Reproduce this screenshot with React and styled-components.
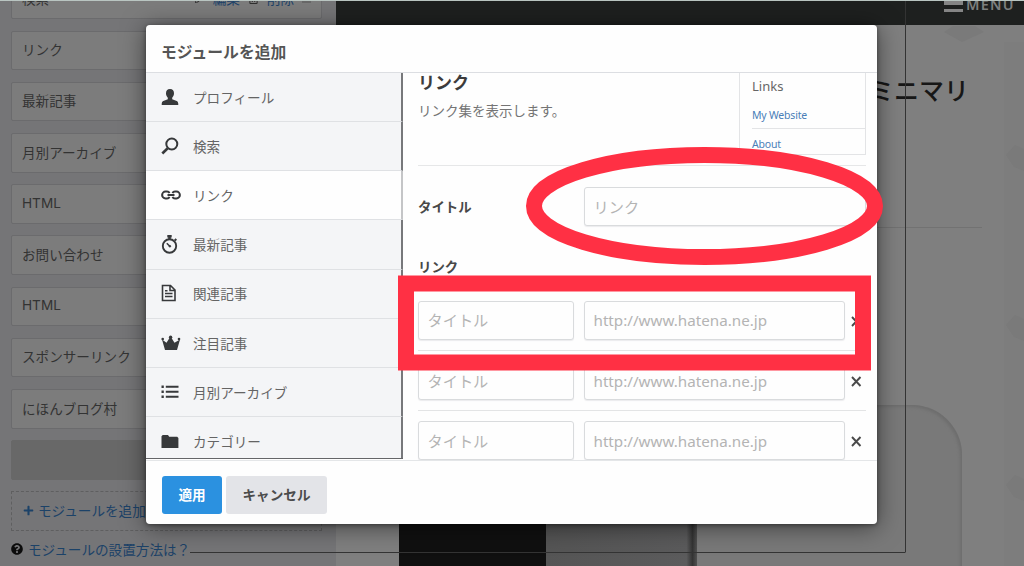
import { useState } from "react";
import styled, { createGlobalStyle } from 'styled-components';
import { FaPencilAlt, FaRegTrashAlt, FaPlus, FaQuestionCircle } from "react-icons/fa";

const GlobalStyle = createGlobalStyle`
  * { box-sizing: border-box; }
  body {
    margin: 0;
    overflow: hidden;
    font-family: "Noto Sans", "Noto Sans CJK JP", sans-serif;
    font-size: 13.6px;
    color: #454545;
  }
`;

const Page = styled.div`
  position: relative;
  display: flex;
  width: 1024px;
  height: 566px;
  overflow: hidden;
  background: #7f7f7f;
  border-top: 1px solid #b9c5c1;
`;

const Sidebar = styled.aside`
  flex: none;
  width: 336px;
  padding: 0 14px 0 11px;
  background: #757577;
`;

const ModuleList = styled.div`
  display: flex;
  flex-direction: column;
  gap: 11.7px;
  margin-top: -21.5px;
`;

const ModuleCard = styled.div`
  display: flex;
  align-items: center;
  justify-content: space-between;
  height: 39.5px;
  padding: 0 10px 2.5px;
  background: ${p => p.$blank ? "#686868" : "#7c7c7c"};
  border: 1px solid ${p => p.$blank ? "#686868" : "#6b6b6d"};
  border-radius: 2px;
  color: #333;
  font-family: Inter, "Noto Sans CJK JP", sans-serif;
`;

const CardActions = styled.div`
  display: flex;
  align-items: center;
  gap: 8px;
  color: #1c4268;
  svg { color: #2f2f2f; }
`;

const AddModule = styled.div`
  display: flex;
  align-items: center;
  gap: 4px;
  height: 40px;
  padding: 0 11px 2px;
  border: 1px dashed #5f5f60;
  color: #1c4268;
  font-size: 13.6px;
`;

const Help = styled.div`
  display: flex;
  align-items: center;
  gap: 5px;
  margin-top: 7.5px;
  color: #1c4268;
  svg { color: #0c0c0c; }
`;

const Preview = styled.main`
  display: flex;
  flex-direction: column;
  flex: 1;
  min-width: 0;
`;

const BlogBar = styled.div`
  display: flex;
  justify-content: flex-end;
  gap: 3px;
  height: 24px;
  padding-right: 9px;
  background: #1e201f;
  color: #7d7f7e;
  font-size: 14.5px;
  font-weight: 600;
  line-height: 7px;
  letter-spacing: 1.3px;
`;

const Burger = styled.span`
  width: 19px;
  height: 11px;
  border: solid #858585;
  border-width: 4px 0 3px;
`;

const BlogTitle = styled.h1`
  height: 203px;
  margin: 0 42px 0 0;
  padding: 46px 13px 0 0;
  border-bottom: 1px solid #727272;
  color: #171717;
  font-family: "Noto Sans CJK JP", sans-serif;
  font-size: 25px;
  font-weight: 500;
  line-height: 36px;
  text-align: right;
`;

const Photo = styled.div`
  display: flex;
  flex: 1;
  margin: 177px 62px 0 63px;
`;

const PhotoPart = styled.div`
  width: ${p => p.$width};
  background: ${p => p.$fill};
  border-radius: ${p => p.$round ? "0 50px 0 0" : "0"};
  box-shadow: ${p => p.$round ? "inset -2px 2px 3px #6e6e6e" : "none"};
`;

const Wallpaper = styled.svg`
  position: absolute;
  right: 0;
  top: 24px;
`;

const Modal = styled.section`
  position: absolute;
  left: 146px;
  top: 24px;
  display: flex;
  flex-direction: column;
  width: 731px;
  height: 499px;
  overflow: hidden;
  background: #fefefe;
  border-radius: 4px;
`;

const ModalShadow = styled.div`
  position: absolute;
  left: 146px;
  top: 24px;
  width: 731px;
  height: 499px;
  border-radius: 4px;
  box-shadow: 0 3px 24px rgba(0, 0, 0, 0.5), 0 1px 4px rgba(0, 0, 0, 0.4);
`;

const ModalHead = styled.h2`
  flex: none;
  height: 48px;
  margin: 0;
  padding: 16px 15px 0;
  border-bottom: 1px solid #dcdee2;
  font-size: 15.8px;
  font-weight: 600;
  line-height: 23px;
  color: #555;
`;

const ModalBody = styled.div`
  display: flex;
  flex: none;
  height: 387px;
  overflow: hidden;
`;

const Nav = styled.nav`
  flex: none;
  width: 257px;
  height: 386px;
  overflow: hidden;
  border-bottom: 1px solid #646568;
`;

const NavItem = styled.div`
  display: flex;
  align-items: center;
  gap: 11px;
  height: 49.15px;
  padding: 0 15px 0.5px;
  background: ${p => p.$active ? "#fefefe" : "#f4f5f7"};
  border-bottom: 1px solid #dfe1e4;
  border-right: 2px solid ${p => p.$active ? "#c4c5c7" : "#77787b"};
  color: #646464;
  cursor: pointer;
  svg { flex: none; color: #37393b; }
`;

const Panel = styled.div`
  flex: 1;
  padding: 0 11px 0 15px;
`;

const Intro = styled.div`
  display: flex;
  justify-content: space-between;
  height: 93px;
  border-bottom: 1px solid #e6e7e8;
`;

const IntroTitle = styled.h3`
  margin: -3px 0 0;
  font-size: 17px;
  font-weight: 600;
  line-height: 26px;
  color: #3c3c3c;
`;

const IntroText = styled.p`
  margin: 5px 0 0;
  line-height: 20px;
  font-size: 13.5px;
  color: #747474;
`;

const Sample = styled.div`
  width: 127px;
  height: 82px;
  overflow: hidden;
  padding-left: 12px;
  border: 1px solid #e3e4e6;
  border-top: none;
  color: #666;
  font-size: 13px;
  line-height: 27px;
`;

const SampleLink = styled.div`
  height: 29px;
  padding-top: 1px;
  border-bottom: 1px solid #e3e4e6;
  color: #4a7fb8;
  font-size: 10.5px;
  letter-spacing: -0.2px;
  line-height: 28px;
`;

const TitleField = styled.div`
  display: grid;
  grid-template-columns: 166px 1fr;
  align-items: center;
  height: 81px;
  margin-bottom: 10px;
`;

const Label = styled.div`
  font-weight: 600;
  font-size: 13.4px;
  line-height: 20px;
  color: #484848;
`;

const Input = styled.input`
  width: ${p => p.$width || "100%"};
  height: 39px;
  padding: 0 8.5px;
  border: 1px solid #d9dbdd;
  border-radius: 3px;
  box-shadow: 0 1px 1px #ececee;
  background: #fefefe;
  font: 15.2px "Noto Sans", "Noto Sans CJK JP", sans-serif;
  outline: none;
  &::placeholder { color: #b4b4b4; opacity: 1; }
`;

const LinkRow = styled.div`
  display: flex;
  align-items: center;
  gap: 10px;
  height: 60.4px;
  border-bottom: 1px solid #e3e4e5;
  svg { margin-left: -4px; margin-top: 2px; }
`;

const LinkRows = styled.div`
  margin-top: 13.5px;
`;

const ModalFoot = styled.div`
  display: flex;
  gap: 4px;
  flex: 1;
  padding: 15px 16px;
  border-top: 1px solid #e4e6e8;
`;

const Button = styled.button`
  width: ${p => p.$primary ? 60 : 101}px;
  height: 38px;
  padding: 0 0 2px;
  border: none;
  border-radius: 3px;
  background: ${p => p.$primary ? "#2b91e0" : "#e3e4e8"};
  color: ${p => p.$primary ? "#fff" : "#4c4c4c"};
  font: 600 13.6px "Noto Sans", "Noto Sans CJK JP", sans-serif;
`;

const Marks = styled.svg`
  position: absolute;
  left: 0;
  top: -1px;
  pointer-events: none;
`;

const icons = {
  person: <path fill="currentColor" d="M9 1c2.800 0 4 1.800 4 4.300 0 2-.8 3.500-1.800 4.400v1.600l4.500 1.700c1.200.5 1.600 1.200 1.600 4H.7c0-2.800.4-3.500 1.600-4l4.500-1.700V9.700C5.800 8.800 5 7.300 5 5.300 5 2.800 6.200 1 9 1z" />,
  search: <g fill="none" stroke="currentColor"><circle cx="10.800" cy="7" r="5.500" strokeWidth="2" /><path d="M6.700 11.300 1.300 16.500" strokeWidth="2.600" /></g>,
  link: <g fill="none" stroke="currentColor" strokeWidth="2"><path d="M8.500 7.200C8 6 7.300 5.600 6 5.600H4.500a3.400 3.400 0 0 0 0 6.800H6c1.300 0 2-.4 2.500-1.600M11.500 7.200C12 6 12.700 5.600 14 5.600h1.500a3.400 3.400 0 0 1 0 6.800H14c-1.300 0-2-.4-2.500-1.600M6.500 9h7" /></g>,
  watch: <g fill="none" stroke="currentColor"><circle cx="8.500" cy="11" r="6.700" strokeWidth="1.900" /><path d="M6.300 1.200h4.400M8.500 1v4" strokeWidth="2.600" /><path d="m13.800 5.500 1.500-1.500" strokeWidth="2" /><path d="m5.800 8.300 3.200 3.200" strokeWidth="1.500" /><circle cx="8.900" cy="11.300" r=".8" fill="currentColor" /></g>,
  page: <g fill="none" stroke="currentColor" strokeWidth="1.600"><path d="M1.500 1.500h8l4.500 4.500v10.500H1.500zM9 1.500v5h5M4 9.500h7.500M4 12.500h7.500M4 6.800h2.500" /></g>,
  crown: <g fill="currentColor"><path d="M1 5.500l4.500 3.200L8.500 4h2l3 4.700L19 5.500 16 16H4z" /><circle cx="1.700" cy="5" r="1.300" /><circle cx="9.600" cy="3.200" r="1.700" /><circle cx="18" cy="5" r="1.300" /></g>,
  list: <g fill="currentColor"><path d="M4.800 2.800h12.700v2H4.800zM4.800 7.800h12.700v2H4.800zM4.800 12.800h12.700v2H4.800z" /><path d="M.5 2.600h2.300v2.300H.5zM.5 7.600h2.300v2.300H.5zM.5 12.600h2.300v2.300H.5z" /></g>,
  folder: <path fill="currentColor" d="M.5 4.300 1.700 3H7l1.200 1.700h8l1.200 1.200V16H.5z" />,
};

const navItems = [
  ["person", "プロフィール"],
  ["search", "検索"],
  ["link", "リンク"],
  ["watch", "最新記事"],
  ["page", "関連記事"],
  ["crown", "注目記事"],
  ["list", "月別アーカイブ"],
  ["folder", "カテゴリー"],
];

const modules = ["リンク", "最新記事", "月別アーカイブ", "HTML", "お問い合わせ", "HTML", "スポンサーリンク", "にほんブログ村"];

export default function App () {
    const [active, setActive] = useState("link");

    return (
        <Page>
            <GlobalStyle />
            <Sidebar>
                <ModuleList>
                    <ModuleCard>
                        検索
                        <CardActions>
                            <FaPencilAlt size={10} />編集
                            <FaRegTrashAlt size={11} />削除
                            <svg width="9" height="9"><path d="M0 1h9M0 8h9" stroke="#555" /></svg>
                        </CardActions>
                    </ModuleCard>
                    {modules.map((name, i) => <ModuleCard key={i}>{name}</ModuleCard>)}
                    <ModuleCard $blank />
                    <AddModule><FaPlus size={11} />モジュールを追加</AddModule>
                </ModuleList>
                <Help><FaQuestionCircle size={12} />モジュールの設置方法は？</Help>
            </Sidebar>
            <Preview>
                <BlogBar><Burger />MENU</BlogBar>
                <BlogTitle>ミニマリ</BlogTitle>
                <Photo>
                    <PhotoPart $width="147px" $fill="#101010" />
                    <PhotoPart $width="151px" $fill="linear-gradient(90deg, #555 0, #5b5b5c 93%, #343434 97%, #505050)" />
                    <PhotoPart $width="265px" $fill="#797979" $round />
                </Photo>
            </Preview>
            <Wallpaper width="84" height="542">
                <path d="M64 17h20v525H64z" fill="#7d7d7d" />
                <path d="m4 7 9-6h22l9 6-22 10z" fill="#7a7a7a" />
                <path d="m66 130 9-10 9 4v22l-10-4zM66 300l9-10 9 4v22l-10-4zM66 460l9-10 9 4v22l-10-4z" fill="#7a7a7a" />
            </Wallpaper>
            <ModalShadow />
            <Modal>
                <ModalHead>モジュールを追加</ModalHead>
                <ModalBody>
                    <Nav>
                        {navItems.map(([icon, name]) => (
                            <NavItem key={icon} $active={active === icon} onClick={() => setActive(icon)}>
                                <svg width="21" height="18" viewBox="0 0 21 18" overflow="visible">{icons[icon]}</svg>
                                {name}
                            </NavItem>
                        ))}
                    </Nav>
                    <Panel>
                        <Intro>
                            <div>
                                <IntroTitle>リンク</IntroTitle>
                                <IntroText>リンク集を表示します。</IntroText>
                            </div>
                            <Sample>
                                Links
                                <SampleLink>My Website</SampleLink>
                                <SampleLink>About</SampleLink>
                            </Sample>
                        </Intro>
                        <TitleField>
                            <Label>タイトル</Label>
                            <Input placeholder="リンク" />
                        </TitleField>
                        <Label>リンク</Label>
                        <LinkRows>
                            {[0, 1, 2].map(i => (
                                <LinkRow key={i}>
                                    <Input $width="156px" placeholder="タイトル" />
                                    <Input $width="261px" placeholder="http://www.hatena.ne.jp" />
                                    <svg width="11" height="11"><path d="m1 1 8.500 9M9.500 1 1 10" stroke="#4a4a4a" strokeWidth="1.900" /></svg>
                                </LinkRow>
                            ))}
                        </LinkRows>
                    </Panel>
                </ModalBody>
                <ModalFoot>
                    <Button $primary>適用</Button>
                    <Button>キャンセル</Button>
                </ModalFoot>
            </Modal>
            {/* selection frame and red pen marks */}
            <Marks width="1024" height="566" fill="none">
                <path d="M905.500 1v551.500M190 552.500h715" stroke="#333" />
                <ellipse cx="704.500" cy="206" rx="170.500" ry="51" stroke="#ff3044" strokeWidth="16" />
                <path d="M406 283.500h457v79H406z" stroke="#ff3044" strokeWidth="16" />
            </Marks>
        </Page>
    );
}
